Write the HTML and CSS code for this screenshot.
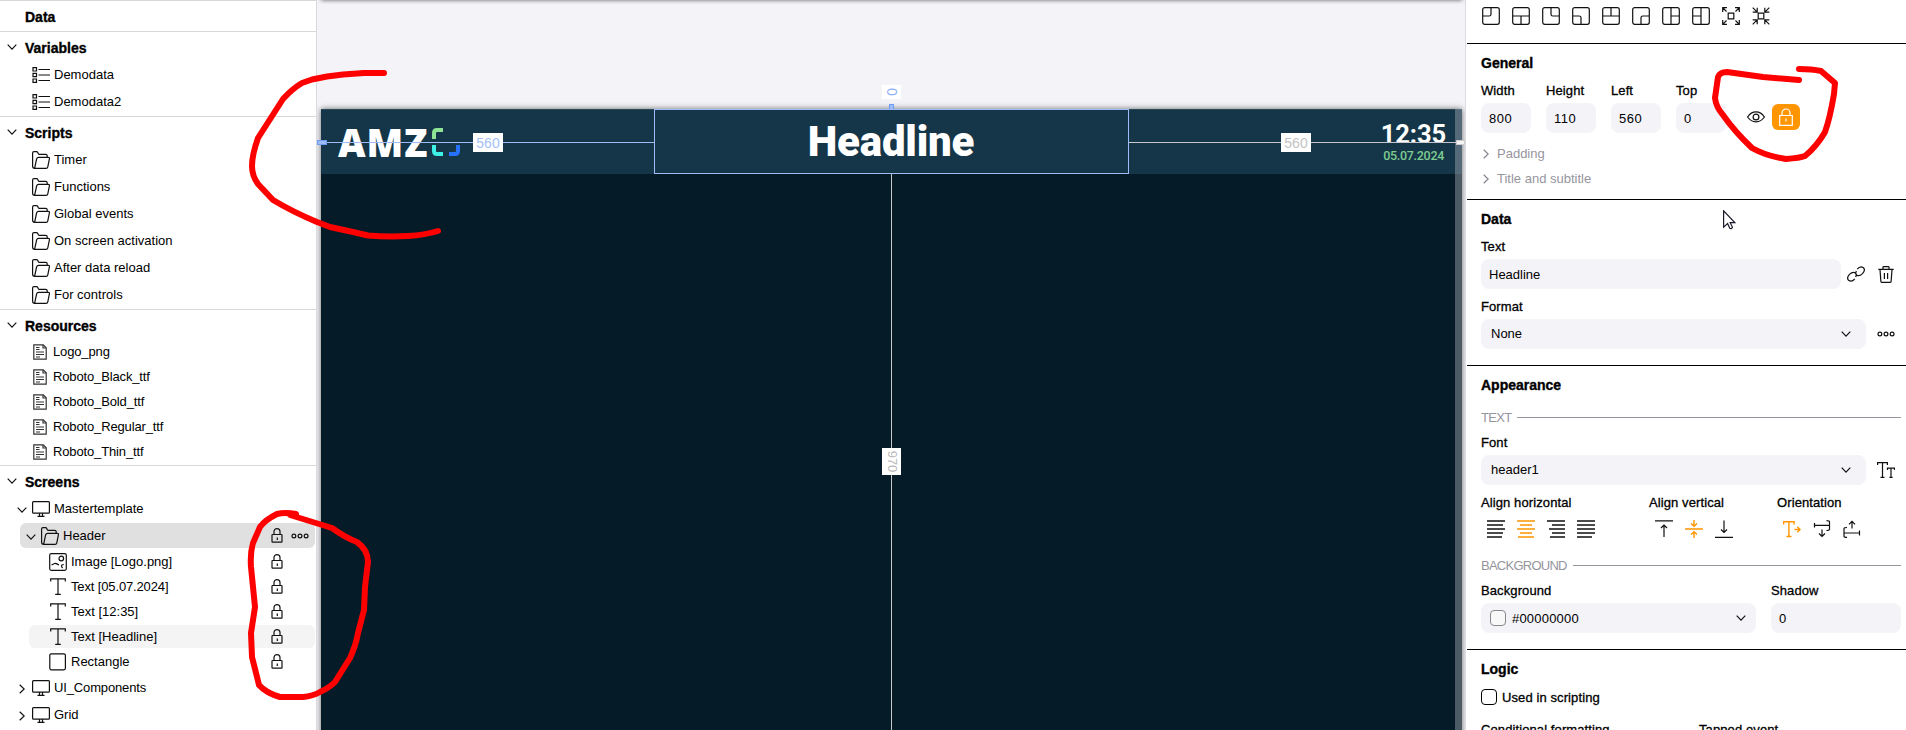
FILE: index.html
```html
<!DOCTYPE html>
<html lang="en">
<head>
<meta charset="utf-8">
<title>Screen designer</title>
<link rel="stylesheet" href="styles.css">
</head>
<body>
<svg class="defs" width="0" height="0">
  <symbol id="down" viewBox="0 0 10 6"><path d="M.7.7 5 5.1 9.300.7"/></symbol>
  <symbol id="right" viewBox="0 0 6 10"><path d="M.7.7 5.200 5 .7 9.300"/></symbol>
  <symbol id="list" viewBox="0 0 18 16"><path d="M1 .7h3.500v3.300H1zM1 6.300h3.500v3.300H1zM1 12h3.500v3.300H1zM6.500 2.500H18M6.500 8H18M6.500 13.500H18"/></symbol>
  <symbol id="folder" viewBox="0 0 18 18"><path d="M2.600 17.300C1.200 17.300.6 16.500.6 15.300V2C.6 1 1.200.6 2 .6h2.500c.7 0 1 .3 1.300.9l.5 1.200c.2.500.6.700 1.200.7h6.200c1 0 1.500.5 1.500 1.400v1.400M2.600 17.300 4.600 8c.3-1 .9-1.700 2-1.700h9.500c1 0 1.500.6 1.300 1.600l-1.600 8c-.2.900-.8 1.400-1.700 1.400z"/></symbol>
  <symbol id="doc" viewBox="0 0 14 16"><path d="M.8.8h9.500l2.900 3v11.400H.8z"/><path d="M10 1v3h3M3 3.500h3.500M3 5.500h3.500M3 8h8M3 10.500h8M3 13h4"/></symbol>
  <symbol id="screen" viewBox="0 0 18 16"><path d="M1.500.6h15c.6 0 .9.400.9.900v9.700c0 .6-.3.900-.9.900h-15c-.6 0-.9-.3-.9-.9V1.500C.6 1 .9.6 1.500.6zM7.500 12.500v2.700M10.500 12.500v2.700M5.500 15.400h7"/></symbol>
  <symbol id="lock" viewBox="0 0 12 15"><path d="M3 6.500V3.600a3 3 0 0 1 6 0v2.900M1.600 6.500h8.800c.4 0 .6.300.6.700v6.300c0 .5-.2.700-.6.700H1.600c-.4 0-.6-.2-.6-.7V7.200c0-.4.200-.7.600-.7zM6.300 9.500v2.500"/></symbol>
  <symbol id="dots" viewBox="0 0 18 6"><circle cx="2.900" cy="3" r="1.900"/><circle cx="9" cy="3" r="1.900"/><circle cx="15.100" cy="3" r="1.900"/></symbol>
  <symbol id="image" viewBox="0 0 18 18"><rect x=".7" y=".7" width="16.600" height="16.600" rx="1.500"/><circle cx="12.300" cy="5.500" r="2.300"/><path d="M2.500 12 6 10.300c2 .2 2.500 1.200 4 1.500M14.800 11.500c-2 0-2.300 1-2.300 1.500 0 1 .5 1.500 1.200 2"/></symbol>
  <symbol id="text" viewBox="0 0 16 17"><path d="M.7 3.500V.8h14.600v2.700M8 .8v15.500M5.200 16.300h5.600"/></symbol>
  <symbol id="rect" viewBox="0 0 18 18"><rect x=".8" y=".8" width="15.600" height="16" rx="1.500"/></symbol>
</svg>
<main class="app">
  <aside class="tree">
    <section class="group first"><h2>Data</h2></section>
    <section class="group">
      <h2><svg class="caret"><use href="#down"/></svg>Variables</h2>
      <div class="row"><svg class="i list"><use href="#list"/></svg>Demodata</div>
      <div class="row"><svg class="i list"><use href="#list"/></svg>Demodata2</div>
    </section>
    <section class="group">
      <h2><svg class="caret"><use href="#down"/></svg>Scripts</h2>
      <div class="row"><svg class="i folder"><use href="#folder"/></svg>Timer</div>
      <div class="row"><svg class="i folder"><use href="#folder"/></svg>Functions</div>
      <div class="row"><svg class="i folder"><use href="#folder"/></svg>Global events</div>
      <div class="row"><svg class="i folder"><use href="#folder"/></svg>On screen activation</div>
      <div class="row"><svg class="i folder"><use href="#folder"/></svg>After data reload</div>
      <div class="row"><svg class="i folder"><use href="#folder"/></svg>For controls</div>
    </section>
    <section class="group files">
      <h2><svg class="caret"><use href="#down"/></svg>Resources</h2>
      <div class="row small"><svg class="i doc"><use href="#doc"/></svg>Logo_png</div>
      <div class="row small"><svg class="i doc"><use href="#doc"/></svg>Roboto_Black_ttf</div>
      <div class="row small"><svg class="i doc"><use href="#doc"/></svg>Roboto_Bold_ttf</div>
      <div class="row small"><svg class="i doc"><use href="#doc"/></svg>Roboto_Regular_ttf</div>
      <div class="row small"><svg class="i doc"><use href="#doc"/></svg>Roboto_Thin_ttf</div>
    </section>
    <section class="group">
      <h2><svg class="caret"><use href="#down"/></svg>Screens</h2>
      <div class="row node"><svg class="twist"><use href="#down"/></svg><svg class="i screen"><use href="#screen"/></svg>Mastertemplate</div>
      <div class="row branch"><div class="pill active"><svg class="twist"><use href="#down"/></svg><svg class="i folder"><use href="#folder"/></svg><span class="name">Header</span><svg class="lock"><use href="#lock"/></svg><svg class="dots"><use href="#dots"/></svg></div></div>
      <div class="row leaf small"><div class="pill"><svg class="i sq"><use href="#image"/></svg><span class="name">Image [Logo.png]</span><svg class="lock"><use href="#lock"/></svg></div></div>
      <div class="row leaf small"><div class="pill"><svg class="i tt"><use href="#text"/></svg><span class="name tight">Text [05.07.2024]</span><svg class="lock"><use href="#lock"/></svg></div></div>
      <div class="row leaf small"><div class="pill"><svg class="i tt"><use href="#text"/></svg><span class="name">Text [12:35]</span><svg class="lock"><use href="#lock"/></svg></div></div>
      <div class="row leaf small"><div class="pill hover"><svg class="i tt"><use href="#text"/></svg><span class="name">Text [Headline]</span><svg class="lock"><use href="#lock"/></svg></div></div>
      <div class="row leaf small"><div class="pill"><svg class="i sq"><use href="#rect"/></svg><span class="name">Rectangle</span><svg class="lock"><use href="#lock"/></svg></div></div>
      <div class="row node tight"><svg class="twist side"><use href="#right"/></svg><svg class="i screen"><use href="#screen"/></svg>UI_Components</div>
      <div class="row node"><svg class="twist side"><use href="#right"/></svg><svg class="i screen"><use href="#screen"/></svg>Grid</div>
    </section>
  </aside>

  <div class="canvas">
    <div class="ruler-shadow"></div>
    <div class="artboard">
      <div class="banner">
        <div class="logo">AMZ</div>
        <svg class="mark" width="28" height="28" viewBox="0 0 28 28"><g fill="none" stroke-width="4"><path stroke="#8fe394" d="M2 11V5q0-3 3-3h6"/><path stroke="#3ff0e4" d="M2 17v6q0 3 3 3h6"/><path stroke="#2672ff" d="M26 17v6q0 3-3 3h-6"/></g></svg>
        <div class="headline">Headline</div>
        <div class="clock">12:35</div>
        <div class="date">05.07.2024</div>
      </div>
    </div>
    <div class="scroll"></div>
    <div class="guide left"></div><div class="guide rightg"></div><div class="guide down"></div>
    <div class="selection"></div>
    <div class="handle hl"></div><div class="handle ht"></div><div class="handle hr"></div>
    <div class="tag t1">560</div><div class="tag t2">560</div>
    <div class="tag t3"><span>0</span></div><div class="tag t4"><span>970</span></div>
  </div>

  <aside class="props">
    <section class="block tools">
      <svg class="t" viewBox="0 0 18 18"><rect x=".7" y=".7" width="16.600" height="16.600" rx="2"/><path d="M.7 9h6.500c1.200 0 1.800-.6 1.800-1.800V.7"/></svg>
      <svg class="t" viewBox="0 0 18 18"><rect x=".7" y=".7" width="16.600" height="16.600" rx="2"/><path d="M.7 9h16.600M9 17V9"/></svg>
      <svg class="t" viewBox="0 0 18 18"><rect x=".7" y=".7" width="16.600" height="16.600" rx="2"/><path d="M9 .7v6.500C9 8.400 9.600 9 10.800 9h6.500"/></svg>
      <svg class="t" viewBox="0 0 18 18"><rect x=".7" y=".7" width="16.600" height="16.600" rx="2"/><path d="M.7 9h6.500c1.200 0 1.800.6 1.800 1.800v6.500"/></svg>
      <svg class="t" viewBox="0 0 18 18"><rect x=".7" y=".7" width="16.600" height="16.600" rx="2"/><path d="M.7 9h16.600M9 1v8"/></svg>
      <svg class="t" viewBox="0 0 18 18"><rect x=".7" y=".7" width="16.600" height="16.600" rx="2"/><path d="M9 17.300v-6.500C9 9.600 9.600 9 10.800 9h6.500"/></svg>
      <svg class="t" viewBox="0 0 18 18"><rect x=".7" y=".7" width="16.600" height="16.600" rx="2"/><path d="M9 .7v16.600M9 9h8"/></svg>
      <svg class="t" viewBox="0 0 18 18"><rect x=".7" y=".7" width="16.600" height="16.600" rx="2"/><path d="M9 .7v16.600M1 9h8"/></svg>
      <svg class="t" viewBox="0 0 18 18"><path d="M6.200 6.200h5.600v5.600H6.200zM.7 5V.7H5M13 .7h4.300V5M17.300 13v4.300H13M5 17.300H.7V13M.7.7l3.800 3.800M17.300.7l-3.800 3.800M17.300 17.300l-3.800-3.800M.7 17.300l3.800-3.800"/></svg>
      <svg class="t" viewBox="0 0 18 18"><path d="M6.200 6.200h5.600v5.600H6.200zM.7 5.200h4.500V.7M12.800.7v4.500h4.500M17.300 12.800h-4.500v4.500M5.200 17.300v-4.500H.7M.7.7l4.500 4.500M17.300.7l-4.500 4.500M17.300 17.300l-4.500-4.500M.7 17.300l4.500-4.500"/></svg>
    </section>

    <section class="block general">
      <h3>General</h3>
      <div class="sizes">
        <label>Width<b>800</b></label><label>Height<b>110</b></label><label>Left<b>560</b></label><label>Top<b>0</b></label>
        <svg class="eye" viewBox="0 0 18 12"><path d="M.6 6C5-.8 13-.8 17.400 6 13 12.500 5 12.500.6 6z"/><circle cx="9" cy="6" r="2.900"/></svg>
        <span class="locked"><svg viewBox="0 0 14 18"><path d="M3 7.500V5a4 4 0 0 1 8 0v2.500M.7 7.500h12.600v9.800H.7zM7 10.500v3"/></svg></span>
      </div>
      <div class="fold"><svg><use href="#right"/></svg><span>Padding</span></div>
      <div class="fold"><svg><use href="#right"/></svg><span>Title and subtitle</span></div>
    </section>

    <section class="block data">
      <h3>Data</h3>
      <div class="lbl l1">Text</div>
      <div class="line"><div class="field f360">Headline</div>
        <svg class="link" viewBox="0 0 18 16"><path d="M7.800 12.800c-2 2.300-4.500 2.700-6.200 1.400-1.600-1.500-1-3.700.9-5.800 2-2 4-2.600 5.500-1.600 1.400 1 1.500 2.600.6 4.200M10.200 3.200c2-2.300 4.500-2.700 6.200-1.400 1.600 1.500 1 3.700-.9 5.800-2 2-4 2.600-5.500 1.600-1.400-1-1.500-2.600-.6-4.200"/></svg>
        <svg class="bin" viewBox="0 0 16 17"><path d="M.3 3.300h15.400M5 3V1.300c0-.4.2-.6.600-.6h4.800c.4 0 .6.200.6.6V3M2 3.500l.9 12.100c0 .5.300.8.800.8h8.600c.5 0 .8-.3.800-.8L14 3.500M6.400 7v6M9.600 7v6"/></svg></div>
      <div class="lbl l2">Format</div>
      <div class="line"><div class="field f385 sel">None<svg class="arrow"><use href="#down"/></svg></div><svg class="more"><use href="#dots"/></svg></div>
    </section>

    <section class="block look">
      <h3>Appearance</h3>
      <div class="cap c1"><span>TEXT</span></div>
      <div class="lbl l3">Font</div>
      <div class="line"><div class="field f385 sel">header1<svg class="arrow"><use href="#down"/></svg></div>
        <svg class="fonts" viewBox="0 0 18 16"><path d="M.6 3V.7h9.800V3M5.500.7v14.600M3.500 15.300h4M10.500 8V6.200h7V8M14 6.200v9.100M12.400 15.300h3.200"/></svg></div>
      <div class="aligns">
        <div class="col a1"><div>Align horizontal</div><p>
          <svg viewBox="0 0 18 18"><path d="M0 1h18M0 5h16M0 9h18M0 13h16M0 17h15"/></svg>
          <svg class="or" viewBox="0 0 18 18"><path d="M0 1h18M3 5h12M0 9h18M3 13h12M1 17h16"/></svg>
          <svg viewBox="0 0 18 18"><path d="M0 1h18M5 5h13M2 9h16M5 13h13M3 17h15"/></svg>
          <svg viewBox="0 0 18 18"><path d="M0 1h18M0 5h18M0 9h18M0 13h18M0 17h15"/></svg></p></div>
        <div class="col a2"><div>Align vertical</div><p>
          <svg viewBox="0 0 18 18"><path d="M0 .8h18M9 17V5M6 8l3-3 3 3"/></svg>
          <svg class="or" viewBox="0 0 18 18"><path d="M0 9h18M9 0v6M6 3.500 9 6.300l3-2.800M9 18v-6M6 14.500l3-2.800 3 2.800"/></svg>
          <svg viewBox="0 0 18 18"><path d="M0 17.300h18M9 .5v12M6 9.500l3 3 3-3"/></svg></p></div>
        <div class="col a3"><div>Orientation</div><p>
          <svg class="or" viewBox="0 0 18 18"><path d="M.6 4.500V1.800h10.500v2.700M5.900 1.800v14.700M3.500 16.500h5M11.500 9.500H17M14.300 6.800l2.800 2.700-2.800 2.700"/></svg>
          <svg viewBox="0 0 18 18"><path d="M1.500 3v4.500M1.500 5.300h15M13.500.6c1.800 0 3 .3 3 1.200v7.500c0 .9-1.200 1.200-3 1.200M9 9.500v7M6 13.500l3 3 3-3"/></svg>
          <svg viewBox="0 0 18 18"><path d="M16.500 10.500v5M16.500 13h-15M4 17.400c-1.600 0-3-.3-3-1.200V8.700c0-.9 1.200-1.200 3-1.200M9 8.500v-7M6 4.300l3-3 3 3"/></svg></p></div>
      </div>
      <div class="cap c2"><span>BACKGROUND</span></div>
      <div class="bg">
        <div><div class="lbl">Background</div><div class="field color"><i></i>#00000000<svg class="arrow"><use href="#down"/></svg></div></div>
        <div><div class="lbl">Shadow</div><div class="field shadow">0</div></div>
      </div>
    </section>

    <section class="block logic">
      <h3>Logic</h3>
      <div class="check"><i></i>Used in scripting</div>
      <div class="events"><span>Conditional formatting</span><span>Tapped event</span></div>
    </section>
  </aside>
</main>

<svg class="pointer" viewBox="0 0 13 20"><path d="M.6.8v16.300l4-3.500 2.200 4.700c1.200.8 2.800-.2 2.600-1.200l-2.200-4.400h4.600z" fill="#fff" stroke="#1a1a2a"/></svg>
<svg class="ink" viewBox="0 0 1906 730">
  <path d="M384 73H364L343 74.500 327 76.500 312 79.500 302 83Q292 89 283 99L258 138Q252 155 252 166 252 176 258 184L273 200Q293 212 317 222L330 227 353 232 368 235.500Q388 237 408 236 425 235 438 231"/>
  <path d="M296 514Q285 512 277 514 265 520 260 527L253 543Q250 553 251 567L255 607 251 633 252 657 259 685Q266 693 280 697H303Q313 696 320 692 329 688 335 682L350 658Q356 645 358 633L364 610 365 587 368 562Q368 550 357 542 346 538 332 528L290 515"/>
  <path d="M1799 80 1763 77 1727 72Q1720 72 1718 77L1715 98Q1716 107 1723 115 1735 132 1752 148 1766 156 1786 159 1800 158 1805 156 1817 146 1825 132 1830 118 1834 94L1835 83 1821 71Q1812 69 1799 69"/>
</svg>
</body>
</html>
```

FILE: styles.css
```css
* { box-sizing: border-box; }
body { margin: 0; width: 1906px; height: 730px; overflow: hidden; background: #fff; color: #000; font: 13px/1 "Liberation Sans", Arial, sans-serif; position: relative; }
svg { fill: none; stroke: #111; stroke-width: 1.2; flex: none; display: block; }
.defs { position: absolute; }
.app { display: flex; height: 730px; }

.tree { width: 317px; border-right: 1px solid #dadadc; overflow: hidden; flex: none; }
.group { border-top: 1px solid #d8d8d8; padding-bottom: 1px; }
.group h2 { margin: 0; height: 29px; padding: 2px 0 0 25px; display: flex; align-items: center; font-size: 14px; position: relative; -webkit-text-stroke: .35px #000; }
.caret { position: absolute; left: 7px; top: 12px; width: 10px; height: 6px; }
.row { height: 27px; display: flex; align-items: center; padding-left: 32px; white-space: nowrap; }
.row.small { height: 25px; }
.files .row { letter-spacing: -.14px; }
.row.tight, .tight { letter-spacing: -.14px; }
.i { margin-right: 4px; }
.list { width: 18px; height: 16px; }
.folder { width: 18px; height: 18px; }
.doc { width: 14px; height: 16px; margin: 0 6px 0 1px; stroke: #333; }
.screen { width: 18px; height: 16px; }
.row.node { padding-left: 17px; }
.twist { width: 10px; height: 6px; margin-right: 5px; position: relative; top: 1px; }
.twist.side { width: 6px; height: 10px; margin: 0 7px 0 2px; }
.row.branch { padding-left: 20px; }
.pill { flex: 1; height: 25px; margin-right: 1px; padding: 0 6px 0 6px; border-radius: 6px; display: flex; align-items: center; }
.pill.active { background: #e0e0e0; }
.name { flex: 1; }
.lock { width: 12px; height: 15px; }
.dots { width: 18px; height: 6px; margin-left: 8px; }
.row.leaf { padding-left: 29px; }
.leaf .pill { height: 23px; padding: 0 32px 0 20px; }
.pill.hover { background: #f4f4f4; }
.sq { width: 18px; height: 18px; }
.tt { width: 16px; height: 17px; margin: 0 5px 0 1px; }

.canvas { width: 1148px; flex: none; background: #f4f3f8; position: relative; overflow: hidden; }
.ruler-shadow { position: absolute; left: 4px; right: 3px; top: -4px; height: 4px; box-shadow: 0 0 4px 0 #555; }
.artboard { position: absolute; left: 4px; top: 109px; width: 1141px; height: 640px; background: #051b27; box-shadow: 0 0 6px #666; }
.banner { height: 65px; background: #143648; border-top: 1px solid #29485a; position: relative; }
.banner div { position: absolute; white-space: nowrap; color: #fff; }
.banner .logo { left: 17px; top: 12px; font: 800 38px/40px "Open Sans", sans-serif; letter-spacing: .9px; }
.mark { position: absolute; left: 111px; top: 18px; }
.banner .headline { left: 333px; width: 474px; text-align: center; top: 8px; font: 900 42px/48px Roboto, sans-serif; letter-spacing: -.2px; }
.banner .clock { right: 16px; top: 9px; font: 700 25.500px/30px Roboto, sans-serif; letter-spacing: -.1px; }
.banner .date { right: 18px; top: 38px; font: 500 12.500px/16px Roboto, sans-serif; color: #7fcb91; letter-spacing: -.3px; }
.scroll { position: absolute; left: 1138px; top: 109px; width: 7px; bottom: 0; background: rgba(180,185,195,.4); }
.guide { position: absolute; background: #a0bcf8; height: 1px; }
.left { left: 10px; width: 327px; top: 142px; }
.rightg { left: 812px; width: 327px; top: 142px; background: #c8c8ca; }
.down { left: 574px; width: 1px; top: 174px; height: 556px; background: #c8c8ca; }
.selection { position: absolute; left: 337px; top: 109px; width: 475px; height: 65px; border: 1px solid #9fbcfa; }
.handle { position: absolute; background: #9ebcf8; border: 1px solid #6f9bf0; }
.hl { left: 0; top: 140px; width: 10px; height: 5px; }
.ht { left: 572px; top: 104px; width: 5px; height: 5px; border-bottom: 0; }
.hr { left: 1139px; top: 140px; width: 9px; height: 5px; background: #f4f4f4; border-color: #ccc; }
.tag { position: absolute; background: #fff; color: #a6c0f8; display: grid; place-items: center; font-size: 14px; }
.t1 { left: 156px; top: 133px; width: 30px; height: 19px; }
.t2 { left: 964px; top: 133px; width: 30px; height: 19px; color: #c3c3c3; }
.t3 { left: 565px; top: 85px; width: 19px; height: 14px; color: #8fb0f5; }
.t4 { left: 565px; top: 448px; width: 19px; height: 27px; color: #b8b8b8; font-size: 13px; }
.t3 span, .t4 span { transform: rotate(90deg); }

.props { width: 441px; flex: none; border-left: 1px solid #dedde2; overflow: hidden; padding-left: 1px; }
.block { padding-left: 14px; border-bottom: 1px solid #000; }
.tools { height: 44px; display: flex; gap: 12px; padding: 7px 0 0 15px; }
.t { width: 18px; height: 18px; }
h3 { margin: 0; font-size: 14px; line-height: 20px; -webkit-text-stroke: .35px #000; }
.general { height: 156px; padding-top: 9px; }
.sizes { display: flex; margin-top: 11px; }
.sizes label, .lbl, .col > div, .check, .events { -webkit-text-stroke: .3px #000; letter-spacing: .1px; }
.sizes label { width: 50px; margin-right: 15px; line-height: 14px; white-space: nowrap; }
.sizes b { display: block; margin-top: 5px; height: 30px; border-radius: 8px; background: #f4f3f8; padding-left: 8px; font-weight: 400; line-height: 31px; -webkit-text-stroke: 0; letter-spacing: .5px; }
.eye { width: 18px; height: 12px; margin: 27px 7px 0 6px; }
.locked { width: 28px; height: 26px; margin-top: 20px; border-radius: 6px; background: #ff9500; display: grid; place-items: center; }
.locked svg { width: 14px; height: 18px; stroke: #fff; }
.fold { display: flex; align-items: center; height: 25px; color: #96959e; position: relative; top: 8px; }
.fold svg { width: 6px; height: 10px; margin: 0 8px 0 2px; stroke: #85848c; }
.data { height: 166px; padding-top: 9px; }
.lbl { line-height: 14px; }
.l1 { margin: 11px 0 5px; }
.l2 { margin: 11px 0 5px; }
.l3 { margin: 12px 0 5px; }
.line { display: flex; align-items: center; }
.field { height: 30px; border-radius: 8px; background: #f4f3f8; padding-left: 8px; display: flex; align-items: center; padding-top: 1px; }
.f360 { width: 360px; }
.f385 { width: 385px; }
.field.sel { padding: 0 0 1px 10px; }
.arrow { width: 10px; height: 6px; margin: 0 15px 0 auto; }
.link { width: 18px; height: 16px; margin-left: 6px; }
.bin { width: 16px; height: 17px; margin-left: 13px; }
.more { width: 18px; height: 6px; margin-left: 11px; }
.fonts { width: 18px; height: 16px; margin-left: 11px; }
.look { height: 284px; padding-top: 9px; }
.cap { height: 14px; display: flex; align-items: center; gap: 6px; color: #96959e; margin-top: 15px; }
.c1 span { letter-spacing: -.7px; }
.c2 span { letter-spacing: -.75px; }
.cap::after { content: ""; flex: 1; height: 1px; background: #96959e; margin-right: 5px; }
.aligns { display: flex; margin-top: 11px; }
.col > div { line-height: 14px; white-space: nowrap; }
.col p { display: flex; gap: 12px; margin: 10px 0 0 6px; }
.col svg { width: 18px; height: 18px; }
.a1 svg { stroke-width: 1.4; }
.col .or { stroke: #ff9500; stroke-width: 1.4; }
.a1 { width: 168px; }
.a2 { width: 128px; }
.c2 { margin-top: 20px; }
.bg { display: flex; gap: 15px; margin-top: 12px; }
.bg .field { margin-top: 5px; }
.field.color { width: 275px; letter-spacing: .2px; padding-top: 0; }
.color .arrow { margin-right: 10px; }
.color i, .check i { width: 16px; height: 16px; border: 1px solid #888; border-radius: 4px; }
.color i { margin: 0 6px 0 1px; background: #f8f8f8; }
.field.shadow { width: 130px; padding-top: 0; }
.logic { border: 0; padding-top: 9px; }
.check { display: flex; align-items: center; margin-top: 10px; height: 16px; }
.check i { margin: 0 5px 0 0; border-color: #000; }
.events { display: flex; margin-top: 18px; line-height: 14px; white-space: nowrap; }
.events span:first-child { width: 218px; }

.pointer { position: absolute; left: 1723px; top: 210px; width: 13px; height: 20px; }
.ink { position: absolute; left: 0; top: 0; width: 1906px; height: 730px; stroke: #f00; stroke-width: 6; stroke-linecap: round; stroke-linejoin: round; pointer-events: none; }
```
